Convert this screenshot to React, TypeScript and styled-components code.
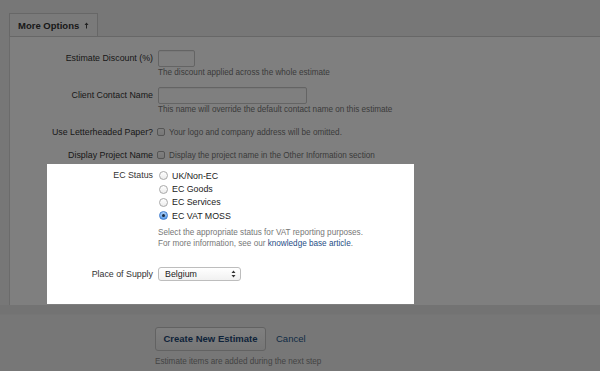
import React from "react";
import styled, { createGlobalStyle } from "styled-components";

const Global = createGlobalStyle`
  html, body { margin: 0; padding: 0; }
  body {
    background: #efefef;
    font-family: "Liberation Sans", Arial, Helvetica, sans-serif;
    overflow: hidden;
    width: 600px;
    height: 371px;
  }
`;

const Page = styled.div`
  width: 600px;
  height: 371px;
  padding-top: 13px;
  box-sizing: border-box;
  display: flex;
  flex-direction: column;
`;

const Panel = styled.section`
  margin-left: 9px;
  display: flex;
  flex-direction: column;
`;

const TabBar = styled.div`
  display: flex;
  height: 23px;
`;

const Tab = styled.div`
  width: 89px;
  box-sizing: border-box;
  border: 1px solid #cfcfcf;
  border-bottom: none;
  background: #f4f4f4;
  display: flex;
  align-items: center;
  padding-left: 8px;
  gap: 5px;
  font-weight: bold;
  font-size: 9.5px;
  color: #333;
`;

const PanelBody = styled.div`
  border-top: 1px solid #cfcfcf;
  border-left: 1px solid #d6d6d6;
  background: #fff;
  padding-top: 13px;
  padding-bottom: 1px;
  display: flex;
  flex-direction: column;
  --label-w: 147px;
`;

const Row = styled.div<{ $mt?: number }>`
  display: flex;
  align-items: flex-start;
  margin-top: ${(p) => p.$mt ?? 0}px;
`;

const Label = styled.div<{ $h?: number }>`
  width: var(--label-w);
  flex: none;
  text-align: right;
  font-size: 8.84px;
  color: #333;
  line-height: ${(p) => p.$h ?? 14}px;
  padding-right: 4px;
  box-sizing: border-box;
  white-space: nowrap;
`;

const Controls = styled.div`
  display: flex;
  flex-direction: column;
  padding-left: 1px;
`;

const TextInput = styled.div<{ $w: number }>`
  width: ${(p) => p.$w}px;
  height: 17px;
  box-sizing: border-box;
  border: 1px solid #c8c8c8;
  border-radius: 2px;
  background: #fff;
  box-shadow: inset 0 1px 1px rgba(0, 0, 0, 0.06);
`;

const Hint = styled.div<{ $mt?: number }>`
  font-size: 8.16px;
  line-height: 10px;
  color: #777;
  margin-top: ${(p) => p.$mt ?? 1}px;
  white-space: nowrap;
`;

const CheckLine = styled.div`
  display: flex;
  align-items: center;
  height: 14px;
  gap: 4px;
  margin-left: -1px;
`;

const CheckBox = styled.span`
  width: 8px;
  height: 8px;
  box-sizing: border-box;
  border: 1px solid #aaa;
  border-radius: 2px;
  background: linear-gradient(#fff, #eee);
`;

const CheckText = styled.span`
  font-size: 8.16px;
  color: #777;
  white-space: nowrap;
`;

const Spotlight = styled.div`
  position: relative;
  z-index: 2;
  margin-top: 2px;
  margin-left: 37px;
  width: 367px;
  background: #fff;
  box-shadow: 0 0 0 2000px rgba(0, 0, 0, 0.5);
  padding: 5px 0 23px;
  box-sizing: border-box;
  display: flex;
  flex-direction: column;
  --label-w: 110px;
`;

const RadioList = styled.div`
  display: flex;
  flex-direction: column;
  padding-left: 1px;
`;

const RadioLine = styled.label`
  display: flex;
  align-items: center;
  height: 13.4px;
  gap: 4px;
  font-size: 8.84px;
  color: #222;
  white-space: nowrap;
`;

const Radio = styled.span<{ $on?: boolean }>`
  width: 9px;
  height: 9px;
  border-radius: 50%;
  box-sizing: border-box;
  display: flex;
  align-items: center;
  justify-content: center;
  border: 1px solid ${(p) => (p.$on ? "#3b7bd0" : "#a9a9a9")};
  background: ${(p) =>
    p.$on
      ? "linear-gradient(#a9cdf6, #5d9de8)"
      : "linear-gradient(#ffffff, #ececec)"};
  &::after {
    content: "";
    display: ${(p) => (p.$on ? "block" : "none")};
    width: 3px;
    height: 3px;
    border-radius: 50%;
    background: #1a2a40;
  }
`;

const HelpText = styled.div`
  font-size: 8.16px;
  line-height: 11px;
  color: #777;
  margin-top: 4px;
  white-space: nowrap;
`;

const Link = styled.a`
  color: #1f4e86;
  text-decoration: none;
`;

const Select = styled.div`
  width: 83px;
  height: 14px;
  box-sizing: border-box;
  border: 1px solid #bdbdbd;
  border-radius: 3px;
  background: linear-gradient(#ffffff, #f1f1f1);
  display: flex;
  align-items: center;
  justify-content: space-between;
  padding: 0 4px 0 6px;
  font-size: 8.84px;
  color: #222;
`;

const Footer = styled.footer`
  flex: 1;
  background: linear-gradient(#e6e6e6 0, #e6e6e6 9px, #efefef 10px);
  padding: 22px 0 0 155px;
  display: flex;
  flex-direction: column;
`;

const Actions = styled.div`
  display: flex;
  align-items: center;
  gap: 10px;
`;

const Button = styled.button`
  width: 111px;
  height: 24px;
  box-sizing: border-box;
  border: 1px solid #c4c4c4;
  border-radius: 3px;
  background: linear-gradient(#ffffff, #ececec);
  font-family: inherit;
  font-weight: bold;
  font-size: 9.5px;
  color: #1d4775;
  padding: 0;
`;

const TextLink = styled.a`
  font-size: 9.5px;
  color: #245589;
  text-decoration: none;
`;

const FooterHint = styled.div`
  font-size: 8.16px;
  color: #888;
  margin-top: 6px;
  white-space: nowrap;
`;

const UpArrow = () => (
  <svg width="5" height="7" viewBox="0 0 5 7">
    <path d="M2.5 0.5 L0.5 3 H2 V6.5 H3 V3 H4.5 Z" fill="#444" />
  </svg>
);

const SelectArrows = () => (
  <svg width="5" height="8" viewBox="0 0 5 8">
    <path d="M2.5 0.5 L4.5 3 H0.5 Z M2.5 7.5 L0.5 5 H4.5 Z" fill="#333" />
  </svg>
);

export default function App() {
  return (
    <>
      <Global />
      <Page>
        <Panel>
          <TabBar>
            <Tab>
              More Options <UpArrow />
            </Tab>
          </TabBar>
          <PanelBody>
            <Row>
              <Label $h={17}>Estimate Discount (%)</Label>
              <Controls>
                <TextInput $w={37} />
                <Hint>The discount applied across the whole estimate</Hint>
              </Controls>
            </Row>
            <Row $mt={9}>
              <Label $h={17}>Client Contact Name</Label>
              <Controls>
                <TextInput $w={149} />
                <Hint>This name will override the default contact name on this estimate</Hint>
              </Controls>
            </Row>
            <Row $mt={10}>
              <Label>Use Letterheaded Paper?</Label>
              <Controls>
                <CheckLine>
                  <CheckBox />
                  <CheckText>Your logo and company address will be omitted.</CheckText>
                </CheckLine>
              </Controls>
            </Row>
            <Row $mt={9}>
              <Label>Display Project Name</Label>
              <Controls>
                <CheckLine>
                  <CheckBox />
                  <CheckText>Display the project name in the Other Information section</CheckText>
                </CheckLine>
              </Controls>
            </Row>
            <Spotlight>
              <Row>
                <Label $h={13.4}>EC Status</Label>
                <Controls>
                  <RadioList>
                    <RadioLine><Radio />UK/Non-EC</RadioLine>
                    <RadioLine><Radio />EC Goods</RadioLine>
                    <RadioLine><Radio />EC Services</RadioLine>
                    <RadioLine><Radio $on />EC VAT MOSS</RadioLine>
                  </RadioList>
                  <HelpText>
                    Select the appropriate status for VAT reporting purposes.
                    <br />
                    For more information, see our <Link href="#">knowledge base article</Link>.
                  </HelpText>
                </Controls>
              </Row>
              <Row $mt={18}>
                <Label>Place of Supply</Label>
                <Controls>
                  <Select>
                    Belgium <SelectArrows />
                  </Select>
                </Controls>
              </Row>
            </Spotlight>
          </PanelBody>
        </Panel>
        <Footer>
          <Actions>
            <Button>Create New Estimate</Button>
            <TextLink href="#">Cancel</TextLink>
          </Actions>
          <FooterHint>Estimate items are added during the next step</FooterHint>
        </Footer>
      </Page>
    </>
  );
}
